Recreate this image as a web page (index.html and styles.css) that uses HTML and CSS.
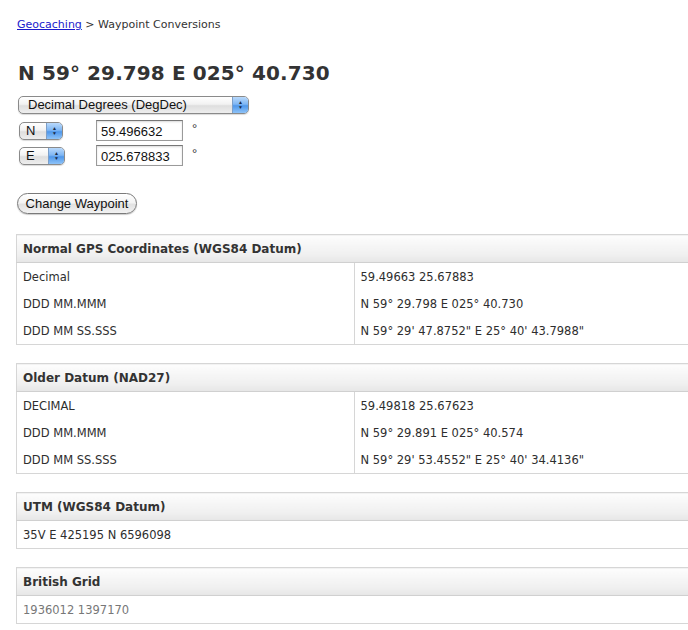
FILE: index.html
```html
<!DOCTYPE html>
<html>
<head>
<meta charset="utf-8">
<link rel="stylesheet" href="styles.css">
</head>
<body>
<div class="page">
  <div class="crumbs"><a href="#">Geocaching</a> &gt; Waypoint Conversions</div>
  <h1 class="title">N 59° 29.798 E 025° 40.730</h1>
  <div class="form">
    <div class="select select-wide"><span class="select-text">Decimal Degrees (DegDec)</span><span class="cap"><span class="arr">▲</span><span class="arr">▼</span></span></div>
    <div class="coord-row">
      <div class="select select-n"><span class="select-text">N</span><span class="cap"><span class="arr">▲</span><span class="arr">▼</span></span></div>
      <input class="field" type="text" value="59.496632">
      <span class="deg">°</span>
    </div>
    <div class="coord-row">
      <div class="select select-e"><span class="select-text">E</span><span class="cap"><span class="arr">▲</span><span class="arr">▼</span></span></div>
      <input class="field" type="text" value="025.678833">
      <span class="deg">°</span>
    </div>
    <button class="btn" type="button">Change Waypoint</button>
  </div>

  <table class="grid">
    <tr><th colspan="2">Normal GPS Coordinates (WGS84 Datum)</th></tr>
    <tr><td class="lbl">Decimal</td><td>59.49663 25.67883</td></tr>
    <tr><td class="lbl">DDD MM.MMM</td><td>N 59° 29.798 E 025° 40.730</td></tr>
    <tr><td class="lbl">DDD MM SS.SSS</td><td>N 59° 29' 47.8752" E 25° 40' 43.7988"</td></tr>
  </table>

  <table class="grid">
    <tr><th colspan="2">Older Datum (NAD27)</th></tr>
    <tr><td class="lbl">DECIMAL</td><td>59.49818 25.67623</td></tr>
    <tr><td class="lbl">DDD MM.MMM</td><td>N 59° 29.891 E 025° 40.574</td></tr>
    <tr><td class="lbl">DDD MM SS.SSS</td><td>N 59° 29' 53.4552" E 25° 40' 34.4136"</td></tr>
  </table>

  <table class="grid">
    <tr><th>UTM (WGS84 Datum)</th></tr>
    <tr><td>35V E 425195 N 6596098</td></tr>
  </table>

  <table class="grid">
    <tr><th>British Grid</th></tr>
    <tr><td class="faded">1936012 1397170</td></tr>
  </table>
</div>
</body>
</html>
```
FILE: styles.css
```css
html, body {
  margin: 0;
  padding: 0;
  overflow: hidden;
  background: #fff;
}
body {
  font-family: "DejaVu Sans", Verdana, sans-serif;
  color: #333;
}
.page {
  padding: 18px 0 0 16px;
}
.crumbs {
  font-size: 11px;
  line-height: 14px;
  padding-left: 1px;
  color: #333;
}
.crumbs a {
  color: #1a1acc;
  text-decoration: underline;
}
.title {
  margin: 29px 0 0 2px;
  font-size: 20px;
  line-height: 24px;
  font-weight: bold;
  letter-spacing: 0.1px;
  color: #333;
}
.form {
  display: flex;
  flex-direction: column;
  align-items: flex-start;
  margin-top: 11px;
  font-family: "Liberation Sans", Arial, sans-serif;
}
.select {
  display: flex;
  align-items: stretch;
  height: 16px;
  border: 1px solid #8a8a8a;
  border-radius: 5px;
  background: linear-gradient(#ffffff, #f2f2f2 45%, #dedede 55%, #eeeeee);
  box-shadow: 0 1px 1px rgba(0,0,0,0.15);
  font-size: 13px;
  color: #111;
  overflow: hidden;
}
.select-text {
  flex: 1;
  line-height: 16px;
  padding-left: 9px;
}
.cap {
  width: 15px;
  display: flex;
  flex-direction: column;
  align-items: center;
  justify-content: center;
  background: linear-gradient(#b9d9fb, #7fb6f3 45%, #4f97ea 55%, #8ec3f8);
  border-left: 1px solid #7c9fc9;
}
.arr {
  font-size: 5px;
  line-height: 5px;
  color: #1b2b44;
}
.select-wide {
  width: 229px;
  margin-left: 2px;
}
.coord-row {
  display: flex;
  align-items: center;
  height: 21px;
  margin-top: 6px;
}
.coord-row + .coord-row {
  margin-top: 4px;
}
.select-n {
  width: 42px;
  margin-left: 3px;
}
.select-e {
  width: 44px;
  margin-left: 3px;
}
.select-n .select-text, .select-e .select-text {
  padding-left: 6px;
}
.field {
  box-sizing: border-box;
  width: 87px;
  height: 21px;
  margin: 0 0 0 33px;
  padding: 1px 4px 0;
  border: 1px solid #9a9a9a;
  border-top-color: #777;
  box-shadow: inset 0 1px 2px rgba(0,0,0,0.15);
  font-family: "Liberation Sans", Arial, sans-serif;
  font-size: 13px;
  color: #111;
  background: #fff;
}
.select-e + .field {
  margin-left: 31px;
}
.deg {
  margin-left: 9px;
  font-size: 13px;
  color: #333;
  position: relative;
  top: -2px;
}
.btn {
  margin: 27px 0 0 1px;
  width: 120px;
  height: 21px;
  padding: 0;
  border: 1px solid #7a7a7a;
  border-radius: 11px;
  background: linear-gradient(#ffffff, #f4f4f4 45%, #e2e2e2 55%, #f2f2f2);
  box-shadow: 0 1px 1px rgba(0,0,0,0.2);
  font-family: "Liberation Sans", Arial, sans-serif;
  font-size: 13px;
  color: #111;
}
.grid {
  width: 676px;
  border-collapse: collapse;
  border: 1px solid #d6d6d6;
  margin-top: 18px;
  font-size: 11.5px;
  color: #2e2e2e;
}
.form + .grid {
  margin-top: 20px;
}
.grid th {
  height: 27px;
  padding: 0 6px;
  text-align: left;
  font-size: 12px;
  font-weight: bold;
  background: linear-gradient(#fdfdfd, #f0f0f0 70%, #e6e6e6);
  border-bottom: 1px solid #d0d0d0;
  color: #333;
}
.grid td {
  height: 27px;
  padding: 0 6px;
  width: 50%;
}
.grid td.lbl {
  border-right: 1px solid #d6d6d6;
}
.grid td.faded {
  color: #777;
}
```
